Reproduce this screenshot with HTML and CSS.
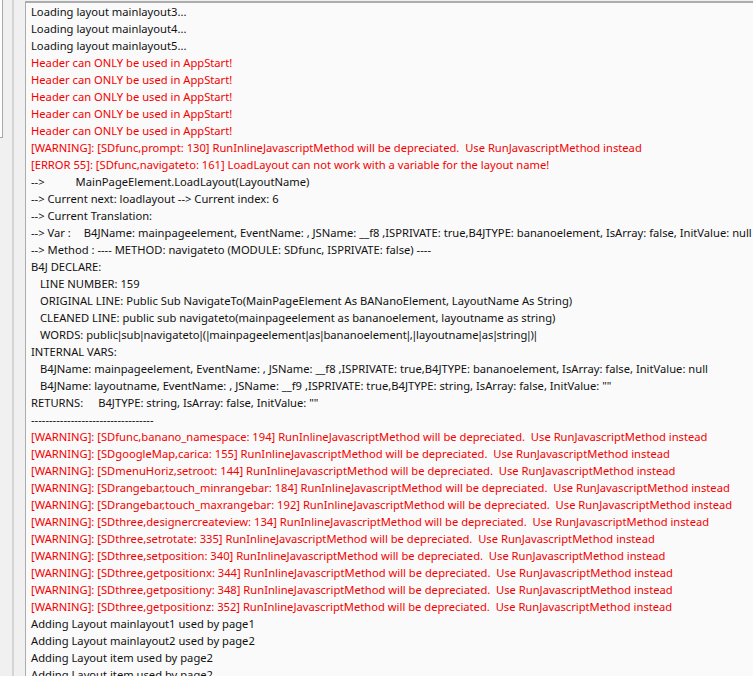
FILE: index.html
```html
<!DOCTYPE html>
<html lang="en">
<head>
    <meta charset="UTF-8">
    <title>Build Log</title>
    <link rel="stylesheet" href="styles.css">
</head>
<body>
    <div class="window">
        <div class="side-box"></div>
        <div class="splitter"></div>
        <div class="log">
            <div class="line">Loading layout mainlayout3...</div>
            <div class="line">Loading layout mainlayout4...</div>
            <div class="line">Loading layout mainlayout5...</div>
            <div class="line err">Header can ONLY be used in AppStart!</div>
            <div class="line err">Header can ONLY be used in AppStart!</div>
            <div class="line err">Header can ONLY be used in AppStart!</div>
            <div class="line err">Header can ONLY be used in AppStart!</div>
            <div class="line err">Header can ONLY be used in AppStart!</div>
            <div class="line err">[WARNING]: [SDfunc,prompt: 130] RunInlineJavascriptMethod will be depreciated.  Use RunJavascriptMethod instead</div>
            <div class="line err">[ERROR 55]: [SDfunc,navigateto: 161] LoadLayout can not work with a variable for the layout name!</div>
            <div class="line">--&gt;<span class="tab1"></span>MainPageElement.LoadLayout(LayoutName)</div>
            <div class="line">--&gt; Current next: loadlayout --&gt; Current index: 6</div>
            <div class="line">--&gt; Current Translation:</div>
            <div class="line">--&gt; Var :<span class="tab2"></span>B4JName: mainpageelement, EventName: , JSName: __f8 ,ISPRIVATE: true,B4JTYPE: bananoelement, IsArray: false, InitValue: null</div>
            <div class="line">--&gt; Method : ---- METHOD: navigateto (MODULE: SDfunc, ISPRIVATE: false) ----</div>
            <div class="line">B4J DECLARE:</div>
            <div class="line ind">LINE NUMBER: 159</div>
            <div class="line ind">ORIGINAL LINE: Public Sub NavigateTo(MainPageElement As BANanoElement, LayoutName As String)</div>
            <div class="line ind">CLEANED LINE: public sub navigateto(mainpageelement as bananoelement, layoutname as string)</div>
            <div class="line ind">WORDS: public<span class="pipe">|</span>sub<span class="pipe">|</span>navigateto<span class="pipe">|</span>(<span class="pipe">|</span>mainpageelement<span class="pipe">|</span>as<span class="pipe">|</span>bananoelement<span class="pipe">|</span>,<span class="pipe">|</span>layoutname<span class="pipe">|</span>as<span class="pipe">|</span>string<span class="pipe">|</span>)<span class="pipe">|</span></div>
            <div class="line">INTERNAL VARS:</div>
            <div class="line ind">B4JName: mainpageelement, EventName: , JSName: __f8 ,ISPRIVATE: true,B4JTYPE: bananoelement, IsArray: false, InitValue: null</div>
            <div class="line ind">B4JName: layoutname, EventName: , JSName: __f9 ,ISPRIVATE: true,B4JTYPE: string, IsArray: false, InitValue: ""</div>
            <div class="line">RETURNS:<span class="tab3"></span>B4JTYPE: string, IsArray: false, InitValue: ""</div>
            <div class="line">----------------------------------</div>
            <div class="line err">[WARNING]: [SDfunc,banano_namespace: 194] RunInlineJavascriptMethod will be depreciated.  Use RunJavascriptMethod instead</div>
            <div class="line err">[WARNING]: [SDgoogleMap,carica: 155] RunInlineJavascriptMethod will be depreciated.  Use RunJavascriptMethod instead</div>
            <div class="line err">[WARNING]: [SDmenuHoriz,setroot: 144] RunInlineJavascriptMethod will be depreciated.  Use RunJavascriptMethod instead</div>
            <div class="line err">[WARNING]: [SDrangebar,touch_minrangebar: 184] RunInlineJavascriptMethod will be depreciated.  Use RunJavascriptMethod instead</div>
            <div class="line err">[WARNING]: [SDrangebar,touch_maxrangebar: 192] RunInlineJavascriptMethod will be depreciated.  Use RunJavascriptMethod instead</div>
            <div class="line err">[WARNING]: [SDthree,designercreateview: 134] RunInlineJavascriptMethod will be depreciated.  Use RunJavascriptMethod instead</div>
            <div class="line err">[WARNING]: [SDthree,setrotate: 335] RunInlineJavascriptMethod will be depreciated.  Use RunJavascriptMethod instead</div>
            <div class="line err">[WARNING]: [SDthree,setposition: 340] RunInlineJavascriptMethod will be depreciated.  Use RunJavascriptMethod instead</div>
            <div class="line err">[WARNING]: [SDthree,getpositionx: 344] RunInlineJavascriptMethod will be depreciated.  Use RunJavascriptMethod instead</div>
            <div class="line err">[WARNING]: [SDthree,getpositiony: 348] RunInlineJavascriptMethod will be depreciated.  Use RunJavascriptMethod instead</div>
            <div class="line err">[WARNING]: [SDthree,getpositionz: 352] RunInlineJavascriptMethod will be depreciated.  Use RunJavascriptMethod instead</div>
            <div class="line">Adding Layout mainlayout1 used by page1</div>
            <div class="line">Adding Layout mainlayout2 used by page2</div>
            <div class="line">Adding Layout item used by page2</div>
            <div class="line">Adding Layout item used by page2</div>
        </div>
    </div>
</body>
</html>
```

FILE: styles.css
```css
body {
    margin: 0;
    padding: 0;
    background-color: #f0f0f0;
    overflow: hidden;
}

.window {
    display: flex;
    height: 676px;
    background-color: #f0f0f0;
}

.side-box {
    width: 2px;
    height: 137px;
    background-color: #fdfdfd;
    border-right: 1px solid #a9a9a9;
    border-bottom: 1px solid #a9a9a9;
    flex-shrink: 0;
}

.splitter {
    width: 2px;
    margin-left: 9px;
    margin-right: 11px;
    background-color: #d4d4d4;
    flex-shrink: 0;
}

.log {
    flex: 1;
    min-width: 0;
    margin-top: 1px;
    border-top: 2px solid #acacac;
    border-left: 1px solid #acacac;
    background-color: #fafafa;
    padding: 0 0 0 5px;
    font-family: "Noto Sans", sans-serif;
    font-size: 11.2px;
    color: #111;
    overflow: hidden;
}

.line {
    height: 17px;
    line-height: 17px;
    white-space: pre;
}

.err {
    color: #f50000;
}

.ind {
    padding-left: 9px;
}

.pipe {
    margin: 0 -1.5px;
}

.tab1 {
    display: inline-block;
    width: 31px;
}

.tab2 {
    display: inline-block;
    width: 13px;
}

.tab3 {
    display: inline-block;
    width: 15px;
}
```
